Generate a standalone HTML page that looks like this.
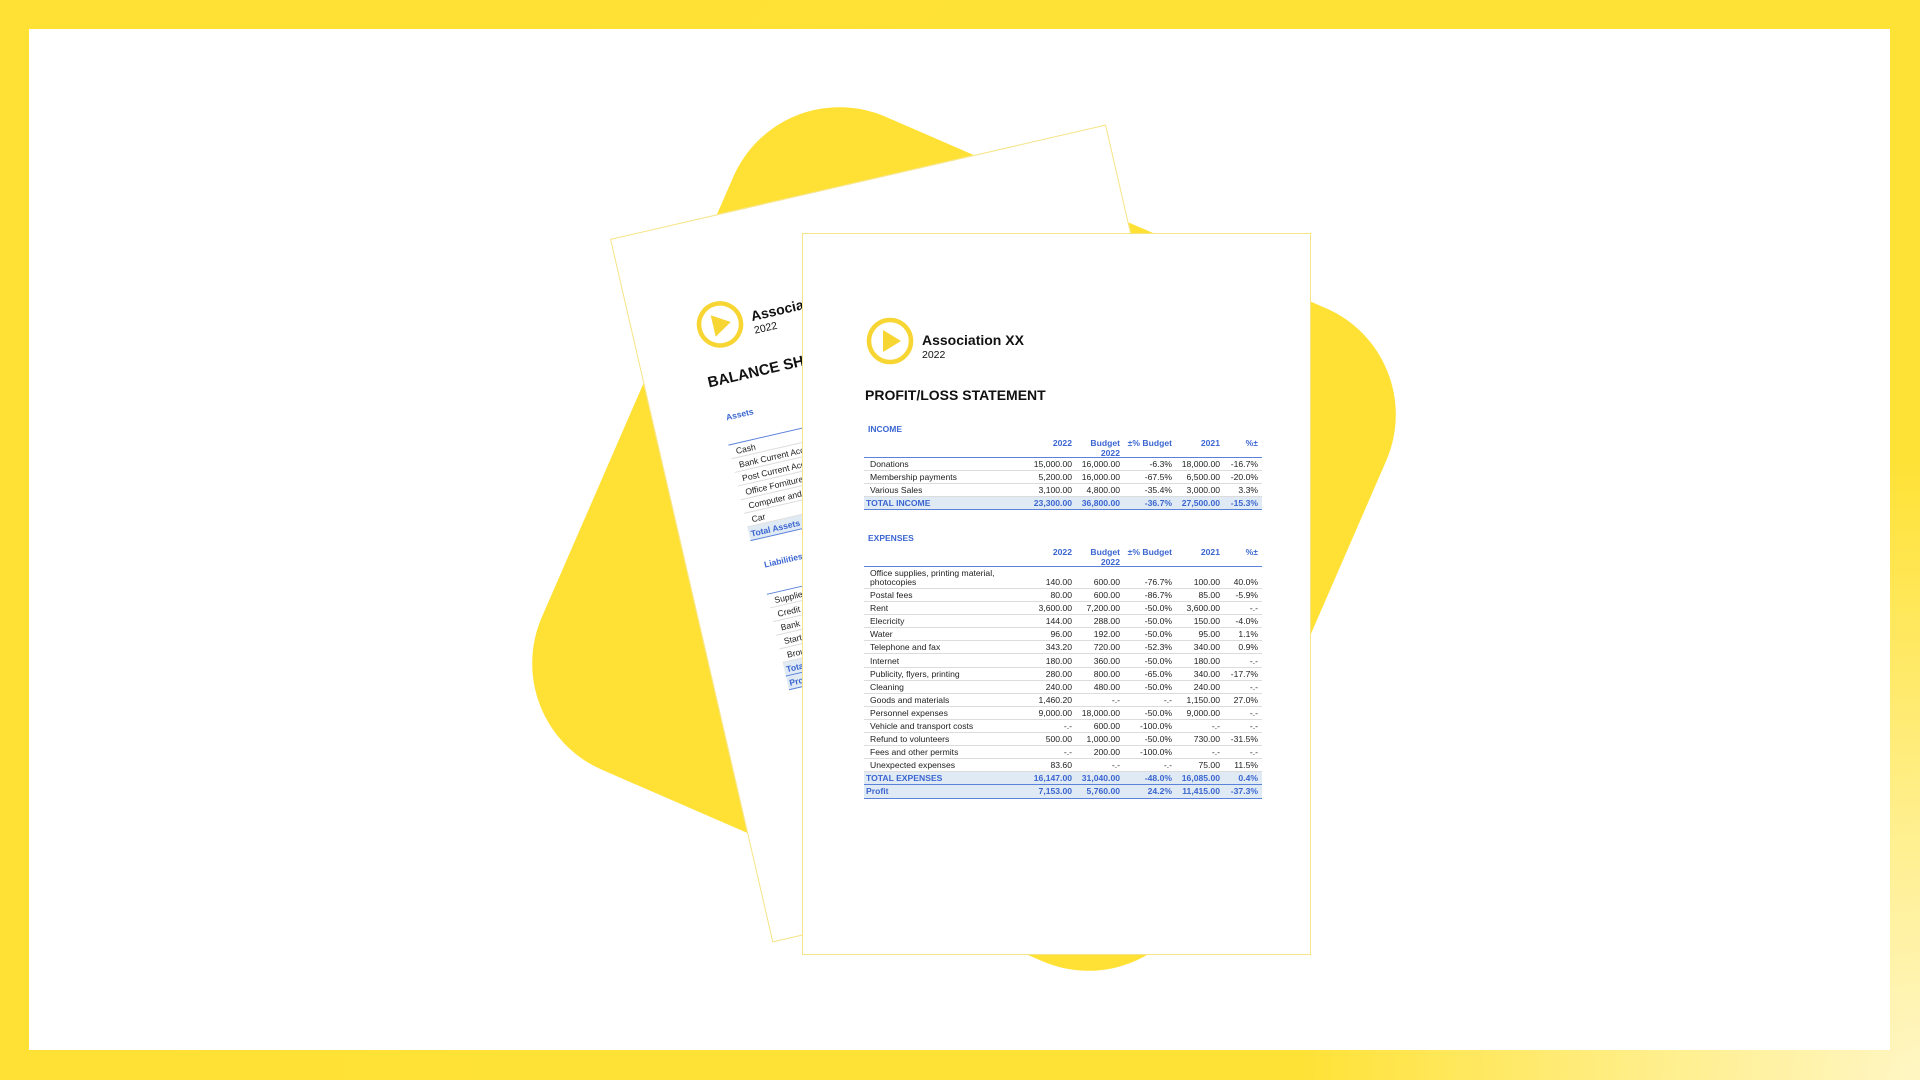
<!DOCTYPE html>
<html><head><meta charset="utf-8"><style>
*{margin:0;padding:0;box-sizing:border-box}
html,body{width:1920px;height:1080px;overflow:hidden}
body{position:relative;background:radial-gradient(circle at 100% 100%,#fff6c4 0,#ffef8c 260px,#ffe236 620px,#ffe135 100%);font-family:"Liberation Sans",Arial,sans-serif}
.inner{position:absolute;left:29px;top:29px;width:1861px;height:1021px;background:#fff;overflow:hidden}
.page{position:absolute;width:509px;height:722px;background:#fff;border:1px solid #f6e486}
.logo{position:absolute;left:63px;top:83px}
.aname{position:absolute;left:119px;top:98px;font-weight:bold;font-size:14px;color:#111}
.ayear{position:absolute;left:119px;top:115px;font-size:10.5px;color:#111}
.title{position:absolute;left:62px;top:153px;font-weight:bold;font-size:14px;color:#111}
.sec{position:absolute;left:65px;font-weight:bold;font-size:8.5px;color:#3b66d1}
.tbl{position:absolute;left:61px;width:398px;font-size:8.6px;color:#222}
.hd{display:flex;height:23px;border-bottom:1.5px solid #5b82db;color:#3b66d1;font-weight:bold;align-items:flex-start}
.r{display:flex;height:13.1px;align-items:center;border-bottom:1px solid #dcdcdc}
.r>div,.hd>div{text-align:right;padding-right:4px;white-space:nowrap}
.r>div:first-child,.hd>div:first-child{text-align:left;padding-left:6px}
.c0{width:160px}.c1{width:52px}.c2{width:48px}.c3{width:52px}.c4{width:48px}.c5{width:38px}
.hd .c1,.hd .c2,.hd .c3,.hd .c4,.hd .c5{line-height:10px;padding-top:3px}
.t{background:#dfeaf4;color:#3b66d1;font-weight:bold;border-bottom:1.5px solid #5b82db}
.t>div:first-child{padding-left:2px}
.two{height:22px;align-items:flex-end;padding-bottom:1px}
.two .c0{line-height:9px}
.bs .r{height:14px}
</style></head><body>
<div class="inner"></div>
<svg style="position:absolute;left:0;top:0" width="1920" height="1080"><rect x="-356" y="-356" width="712" height="712" rx="116" fill="#ffe135" transform="translate(964,539) rotate(23.5)"/></svg>

<!-- back page -->
<div class="page" style="left:610px;top:239px;transform-origin:0 0;transform:rotate(-13deg)">
 <svg class="logo" width="48" height="48" viewBox="0 0 48 48"><circle cx="24" cy="24" r="21" fill="none" stroke="#f7d533" stroke-width="4.5"/><path d="M17 13 L35 24 L17 35Z" fill="#f7d533"/></svg>
 <div class="aname">Association XX</div><div class="ayear">2022</div>
 <div class="title" style="font-size:15px">BALANCE SHEET</div>
 <div class="sec" style="top:194px;left:72px">Assets</div>
 <div class="tbl bs" style="top:204px;left:68px">
  <div class="hd"><div class="c0"></div></div>
  <div class="r"><div class="c0">Cash</div></div>
  <div class="r"><div class="c0">Bank Current Account</div></div>
  <div class="r"><div class="c0">Post Current Account</div></div>
  <div class="r"><div class="c0">Office Forniture</div></div>
  <div class="r"><div class="c0">Computer and Software</div></div>
  <div class="r"><div class="c0">Car</div></div>
  <div class="r t"><div class="c0">Total Assets</div></div>
 </div>
 <div class="sec" style="top:346px;left:76px">Liabilities</div>
 <div class="tbl bs" style="top:358px;left:72px">
  <div class="hd"><div class="c0"></div></div>
  <div class="r"><div class="c0">Suppliers</div></div>
  <div class="r"><div class="c0">Credit card</div></div>
  <div class="r"><div class="c0">Bank loan</div></div>
  <div class="r"><div class="c0">Start-up capital</div></div>
  <div class="r"><div class="c0">Brought forward</div></div>
  <div class="r t"><div class="c0">Total Liabilities</div></div>
  <div class="r t"><div class="c0">Profit</div></div>
 </div>
</div>

<!-- front page -->
<div class="page" style="left:802px;top:233px">
 <svg class="logo" width="48" height="48" viewBox="0 0 48 48"><circle cx="24" cy="24" r="21" fill="none" stroke="#f7d533" stroke-width="4.5"/><path d="M17 13 L35 24 L17 35Z" fill="#f7d533"/></svg>
 <div class="aname">Association XX</div><div class="ayear">2022</div>
 <div class="title">PROFIT/LOSS STATEMENT</div>
 <div class="sec" style="top:190px">INCOME</div>
 <div class="tbl" style="top:201px">
  <div class="hd"><div class="c0"></div><div class="c1">2022</div><div class="c2">Budget<br>2022</div><div class="c3">±% Budget</div><div class="c4">2021</div><div class="c5">%±</div></div>
  <div class="r"><div class="c0">Donations</div><div class="c1">15,000.00</div><div class="c2">16,000.00</div><div class="c3">-6.3%</div><div class="c4">18,000.00</div><div class="c5">-16.7%</div></div>
  <div class="r"><div class="c0">Membership payments</div><div class="c1">5,200.00</div><div class="c2">16,000.00</div><div class="c3">-67.5%</div><div class="c4">6,500.00</div><div class="c5">-20.0%</div></div>
  <div class="r"><div class="c0">Various Sales</div><div class="c1">3,100.00</div><div class="c2">4,800.00</div><div class="c3">-35.4%</div><div class="c4">3,000.00</div><div class="c5">3.3%</div></div>
  <div class="r t"><div class="c0">TOTAL INCOME</div><div class="c1">23,300.00</div><div class="c2">36,800.00</div><div class="c3">-36.7%</div><div class="c4">27,500.00</div><div class="c5">-15.3%</div></div>
 </div>
 <div class="sec" style="top:299px">EXPENSES</div>
 <div class="tbl" style="top:310px">
  <div class="hd"><div class="c0"></div><div class="c1">2022</div><div class="c2">Budget<br>2022</div><div class="c3">±% Budget</div><div class="c4">2021</div><div class="c5">%±</div></div>
  <div class="r two"><div class="c0">Office supplies, printing material,<br>photocopies</div><div class="c1">140.00</div><div class="c2">600.00</div><div class="c3">-76.7%</div><div class="c4">100.00</div><div class="c5">40.0%</div></div>
  <div class="r"><div class="c0">Postal fees</div><div class="c1">80.00</div><div class="c2">600.00</div><div class="c3">-86.7%</div><div class="c4">85.00</div><div class="c5">-5.9%</div></div>
  <div class="r"><div class="c0">Rent</div><div class="c1">3,600.00</div><div class="c2">7,200.00</div><div class="c3">-50.0%</div><div class="c4">3,600.00</div><div class="c5">-.-</div></div>
  <div class="r"><div class="c0">Elecricity</div><div class="c1">144.00</div><div class="c2">288.00</div><div class="c3">-50.0%</div><div class="c4">150.00</div><div class="c5">-4.0%</div></div>
  <div class="r"><div class="c0">Water</div><div class="c1">96.00</div><div class="c2">192.00</div><div class="c3">-50.0%</div><div class="c4">95.00</div><div class="c5">1.1%</div></div>
  <div class="r"><div class="c0">Telephone and fax</div><div class="c1">343.20</div><div class="c2">720.00</div><div class="c3">-52.3%</div><div class="c4">340.00</div><div class="c5">0.9%</div></div>
  <div class="r"><div class="c0">Internet</div><div class="c1">180.00</div><div class="c2">360.00</div><div class="c3">-50.0%</div><div class="c4">180.00</div><div class="c5">-.-</div></div>
  <div class="r"><div class="c0">Publicity, flyers, printing</div><div class="c1">280.00</div><div class="c2">800.00</div><div class="c3">-65.0%</div><div class="c4">340.00</div><div class="c5">-17.7%</div></div>
  <div class="r"><div class="c0">Cleaning</div><div class="c1">240.00</div><div class="c2">480.00</div><div class="c3">-50.0%</div><div class="c4">240.00</div><div class="c5">-.-</div></div>
  <div class="r"><div class="c0">Goods and materials</div><div class="c1">1,460.20</div><div class="c2">-.-</div><div class="c3">-.-</div><div class="c4">1,150.00</div><div class="c5">27.0%</div></div>
  <div class="r"><div class="c0">Personnel expenses</div><div class="c1">9,000.00</div><div class="c2">18,000.00</div><div class="c3">-50.0%</div><div class="c4">9,000.00</div><div class="c5">-.-</div></div>
  <div class="r"><div class="c0">Vehicle and transport costs</div><div class="c1">-.-</div><div class="c2">600.00</div><div class="c3">-100.0%</div><div class="c4">-.-</div><div class="c5">-.-</div></div>
  <div class="r"><div class="c0">Refund to volunteers</div><div class="c1">500.00</div><div class="c2">1,000.00</div><div class="c3">-50.0%</div><div class="c4">730.00</div><div class="c5">-31.5%</div></div>
  <div class="r"><div class="c0">Fees and other permits</div><div class="c1">-.-</div><div class="c2">200.00</div><div class="c3">-100.0%</div><div class="c4">-.-</div><div class="c5">-.-</div></div>
  <div class="r"><div class="c0">Unexpected expenses</div><div class="c1">83.60</div><div class="c2">-.-</div><div class="c3">-.-</div><div class="c4">75.00</div><div class="c5">11.5%</div></div>
  <div class="r t"><div class="c0">TOTAL EXPENSES</div><div class="c1">16,147.00</div><div class="c2">31,040.00</div><div class="c3">-48.0%</div><div class="c4">16,085.00</div><div class="c5">0.4%</div></div>
  <div class="r t"><div class="c0">Profit</div><div class="c1">7,153.00</div><div class="c2">5,760.00</div><div class="c3">24.2%</div><div class="c4">11,415.00</div><div class="c5">-37.3%</div></div>
 </div>
</div>
</body></html>
